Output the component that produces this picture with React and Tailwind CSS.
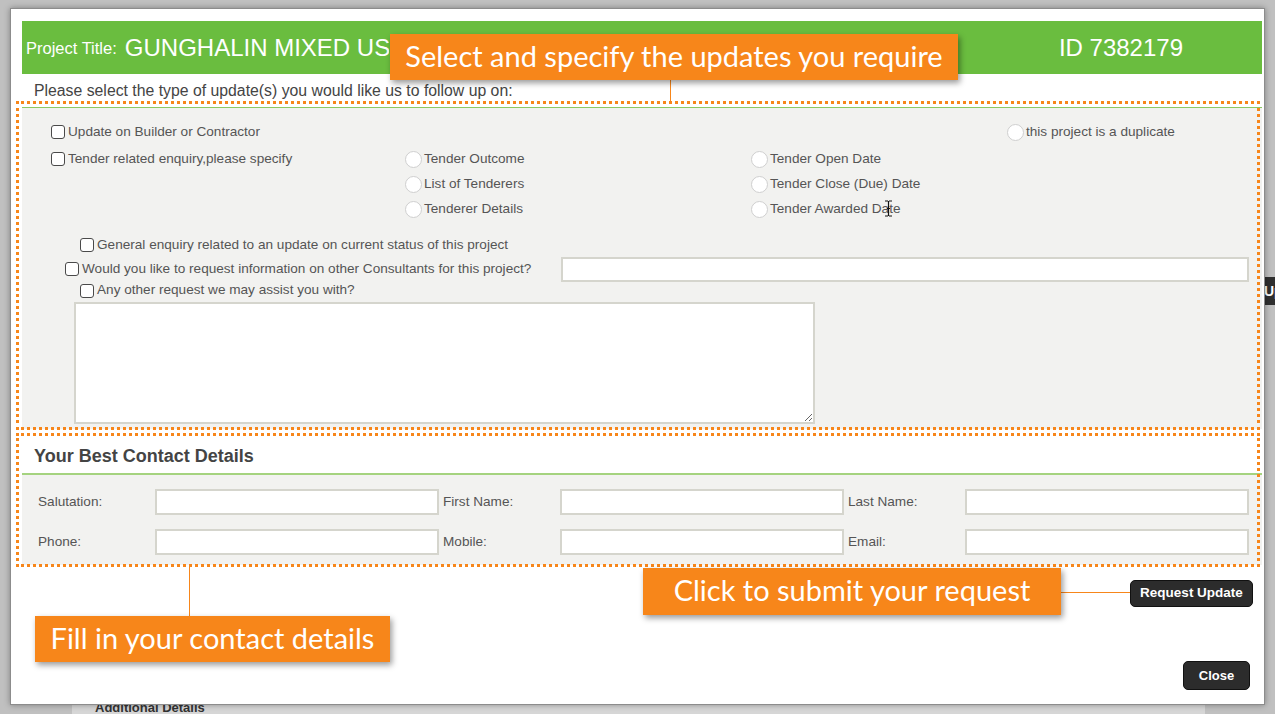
import React from 'react'

function Check() {
  return <span className="inline-block w-[14px] h-[14px] shrink-0 border border-[#4a4a4a] rounded-[3px] bg-white" />
}

function Radio() {
  return <span className="inline-block w-[17px] h-[17px] shrink-0 rounded-full border border-[#cfcfcf] bg-white" />
}

function CheckItem({ label, className = '' }) {
  return (
    <div className={`flex items-center gap-[3px] ${className}`}>
      <Check />
      <span>{label}</span>
    </div>
  )
}

function RadioItem({ label }) {
  return (
    <div className="flex items-center gap-[2px]">
      <Radio />
      <span>{label}</span>
    </div>
  )
}

function Field({ label }) {
  return (
    <div className="flex items-center">
      <span className="w-[117px] shrink-0">{label}</span>
      <span className="block w-[284px] h-[26px] bg-white border-2 border-[#d5d5cd]" />
    </div>
  )
}

function Callout({ children, className = '' }) {
  return (
    <div className={`absolute bg-[#f7861a] text-white font-['Lato',sans-serif] text-[29px] leading-none pb-[4px] flex items-center justify-center shadow-[2px_3px_6px_rgba(0,0,0,0.4)] ${className}`}>
      {children}
    </div>
  )
}

export default function App() {
  return (
    <div className="relative w-[1275px] h-[714px] overflow-hidden bg-[#c0c0c0] font-['Liberation_Sans',Arial,sans-serif] text-[13.6px] text-[#555]">
      {/* page behind the dialog */}
      <div className="absolute inset-0 flex pl-[72px] pt-[690px]">
        <div className="w-[1133px] h-full bg-[#d6d6d6] pl-[23px] pt-[8px] font-bold text-[13px] text-[#333]">
          Additional Details
        </div>
      </div>
      <div className="absolute left-[1262px] top-[277px] w-[20px] h-[28px] bg-[#2f2f2f] text-white text-[14px] font-bold flex items-center pl-[2px]">
        Up
      </div>

      {/* dialog */}
      <div className="absolute left-[10px] top-[8px] w-[1255px] h-[697px] bg-white border border-[#8c8c8c] shadow-[0_0_6px_rgba(0,0,0,0.35)]">
        <div className="ml-[11px] mt-[12px] mr-[2px] h-[53px] bg-[#6abd3f] text-white flex items-center">
          <span className="pl-[4px] text-[16.5px] mt-[2px]">Project Title:</span>
          <span className="ml-[8px] w-[264px] overflow-hidden whitespace-nowrap text-[24px]">GUNGHALIN MIXED USE</span>
          <span className="ml-auto mr-[79px] text-[24px]">ID 7382179</span>
        </div>

        <div className="h-[33px] pl-[23px] pt-[9px] text-[15.8px] text-[#444] leading-none">
          Please select the type of update(s) you would like us to follow up on:
        </div>

        {/* update types */}
        <div className="ml-[11px] mr-[2px] h-[322px] bg-[#f2f2f0] border-t border-[#8cc963] pl-[29px] pt-[10px]">
          <div className="grid grid-cols-[354px_346px_256px_auto] grid-rows-[29px_25px_25px_25px] items-center">
            <CheckItem label="Update on Builder or Contractor" />
            <div />
            <div />
            <RadioItem label="this project is a duplicate" />

            <CheckItem label="Tender related enquiry,please specify" />
            <RadioItem label="Tender Outcome" />
            <RadioItem label="Tender Open Date" />
            <div />

            <div />
            <RadioItem label="List of Tenderers" />
            <RadioItem label="Tender Close (Due) Date" />
            <div />

            <div />
            <RadioItem label="Tenderer Details" />
            <RadioItem label="Tender Awarded Date" />
            <div />
          </div>

          <CheckItem label="General enquiry related to an update on current status of this project" className="mt-[13px] h-[20px] ml-[29px]" />
          <div className="mt-[2px] h-[25px] flex items-center ml-[14px]">
            <div className="w-[496px] shrink-0">
              <CheckItem label="Would you like to request information on other Consultants for this project?" />
            </div>
            <span className="block w-[688px] h-[25px] bg-white border-2 border-[#d5d5cd]" />
          </div>
          <CheckItem label="Any other request we may assist you with?" className="h-[17px] ml-[29px]" />
          <textarea
            readOnly
            className="block mt-[3px] ml-[23px] w-[741px] h-[122px] bg-white border-2 border-[#d5d5cd] resize outline-none"
          />
        </div>

        {/* contact details */}
        <div className="ml-[11px] mr-[2px] mt-[7px]">
          <div className="h-[39px] bg-white border-b-2 border-[#a5d37f] pl-[12px] pt-[3px] flex items-center font-bold text-[18px] text-[#444]">
            Your Best Contact Details
          </div>
          <div className="h-[90px] bg-[#f2f2f0] pl-[16px] pt-[14px] grid grid-cols-[405px_405px_405px] gap-y-[14px] content-start">
            <Field label="Salutation:" />
            <Field label="First Name:" />
            <Field label="Last Name:" />
            <Field label="Phone:" />
            <Field label="Mobile:" />
            <Field label="Email:" />
          </div>
        </div>

        <div className="flex justify-end pr-[11px] mt-[15px]">
          <button className="w-[123px] h-[27px] rounded-[5px] bg-[#2c2c2c] border border-[#111] text-white font-bold text-[13.5px]">
            Request Update
          </button>
        </div>
        <div className="flex justify-end pr-[14px] mt-[54px]">
          <button className="w-[67px] h-[29px] rounded-[5px] bg-[#2c2c2c] border border-[#111] text-white font-bold text-[13px]">
            Close
          </button>
        </div>
      </div>

      {/* annotation frames */}
      <div className="absolute left-[16px] top-[101px] w-[1244px] h-[329px] border-[3px] border-dotted border-[#f7861a]" />
      <div className="absolute left-[16px] top-[433px] w-[1244px] h-[134px] border-[3px] border-dotted border-[#f7861a]" />

      {/* connectors */}
      <div className="absolute left-[670px] top-[80px] w-px h-[22px] bg-[#f7861a]" />
      <div className="absolute left-[189px] top-[566px] w-px h-[50px] bg-[#f7861a]" />
      <div className="absolute left-[1061px] top-[592px] w-[69px] h-px bg-[#f7861a]" />

      <Callout className="left-[390px] top-[34px] w-[568px] h-[46px]">Select and specify the updates you require</Callout>
      <Callout className="left-[35px] top-[616px] w-[355px] h-[46px]">Fill in your contact details</Callout>
      <Callout className="left-[643px] top-[568px] w-[418px] h-[47px]">Click to submit your request</Callout>

      {/* text cursor */}
      <svg className="absolute left-[884px] top-[200px]" width="9" height="17" viewBox="0 0 9 17">
        <path d="M1 1h3m1 0h3M4.5 1v15M1 16h3m1 0h3M3 8.5h3" stroke="#111" strokeWidth="1.2" fill="none" />
      </svg>
    </div>
  )
}
